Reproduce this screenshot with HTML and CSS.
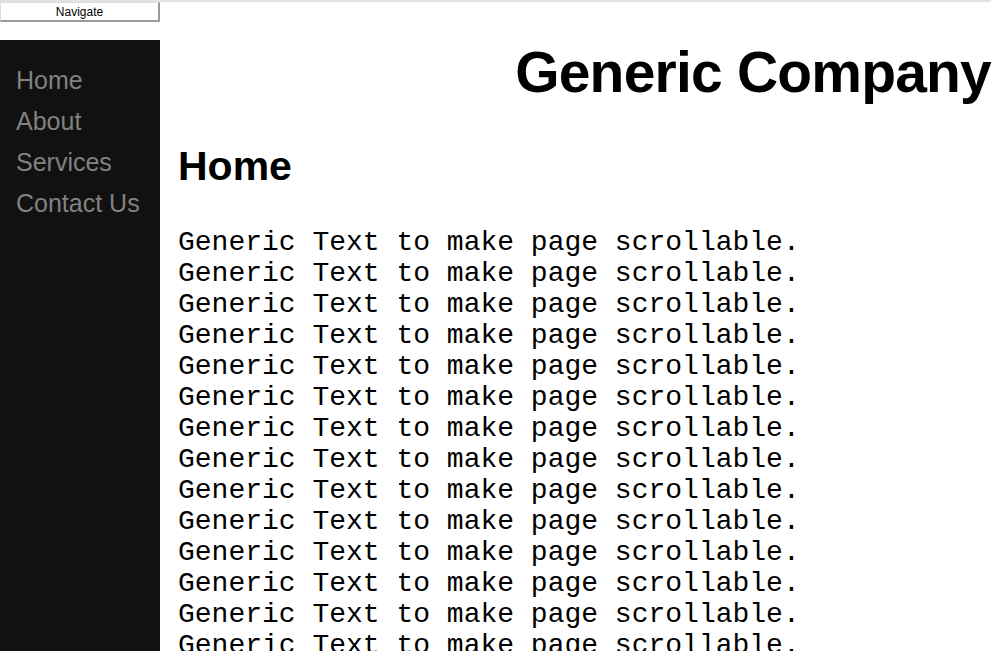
FILE: index.html
```html
<!DOCTYPE html>
<html lang="en">
<head>
<meta charset="utf-8">
<title>Generic Company</title>
<link rel="stylesheet" href="styles.css">
</head>
<body>
<div class="topline"></div>
<div class="layout">
  <aside class="side">
    <button class="nav-toggle" type="button">Navigate</button>
    <nav class="sidenav">
      <a href="#">Home</a>
      <a href="#">About</a>
      <a href="#">Services</a>
      <a href="#">Contact Us</a>
    </nav>
  </aside>
  <main class="main">
    <h1 class="title">Generic Company</h1>
    <h2 class="page-title">Home</h2>
    <div class="text">
      <p>Generic Text to make page scrollable.</p>
      <p>Generic Text to make page scrollable.</p>
      <p>Generic Text to make page scrollable.</p>
      <p>Generic Text to make page scrollable.</p>
      <p>Generic Text to make page scrollable.</p>
      <p>Generic Text to make page scrollable.</p>
      <p>Generic Text to make page scrollable.</p>
      <p>Generic Text to make page scrollable.</p>
      <p>Generic Text to make page scrollable.</p>
      <p>Generic Text to make page scrollable.</p>
      <p>Generic Text to make page scrollable.</p>
      <p>Generic Text to make page scrollable.</p>
      <p>Generic Text to make page scrollable.</p>
      <p>Generic Text to make page scrollable.</p>
    </div>
  </main>
</div>
</body>
</html>
```

FILE: styles.css
```css
html, body {
  margin: 0;
  padding: 0;
  background: #ffffff;
}

body {
  font-family: "Liberation Sans", Arial, sans-serif;
  color: #000;
}

.topline {
  height: 2px;
  background: #e3e3e3;
}

.layout {
  display: grid;
  grid-template-columns: 160px 1fr;
  min-height: 649px;
}

.side {
  display: flex;
  flex-direction: column;
  gap: 18px;
}

.nav-toggle {
  display: block;
  width: 160px;
  height: 20px;
  margin: 0;
  padding: 2px 0 0;
  background: #ffffff;
  border-style: solid;
  border-width: 1px 2px 2px 1px;
  border-color: #dcdcdc #9a9a9a #9a9a9a #dcdcdc;
  font-family: "Liberation Sans", Arial, sans-serif;
  font-size: 12px;
  line-height: 15px;
  color: #000;
}

.sidenav {
  flex: 1;
  background: #111111;
  padding-top: 20px;
  display: flex;
  flex-direction: column;
}

.sidenav a {
  display: block;
  padding-left: 16px;
  font-size: 25px;
  line-height: 41px;
  color: #818181;
  text-decoration: none;
}

.main {
  padding-left: 18px;
  min-width: 0;
}

.title {
  margin: 0;
  padding-top: 38px;
  font-size: 57px;
  line-height: 64px;
  letter-spacing: -0.8px;
  font-weight: bold;
  text-align: right;
  white-space: nowrap;
}

.page-title {
  margin: 39px 0 0;
  font-size: 41px;
  line-height: 46px;
  font-weight: bold;
}

.text {
  margin-top: 38px;
  font-family: "Liberation Mono", "Courier New", monospace;
  font-size: 28px;
  line-height: 31px;
}

.text p {
  margin: 0;
}
```
